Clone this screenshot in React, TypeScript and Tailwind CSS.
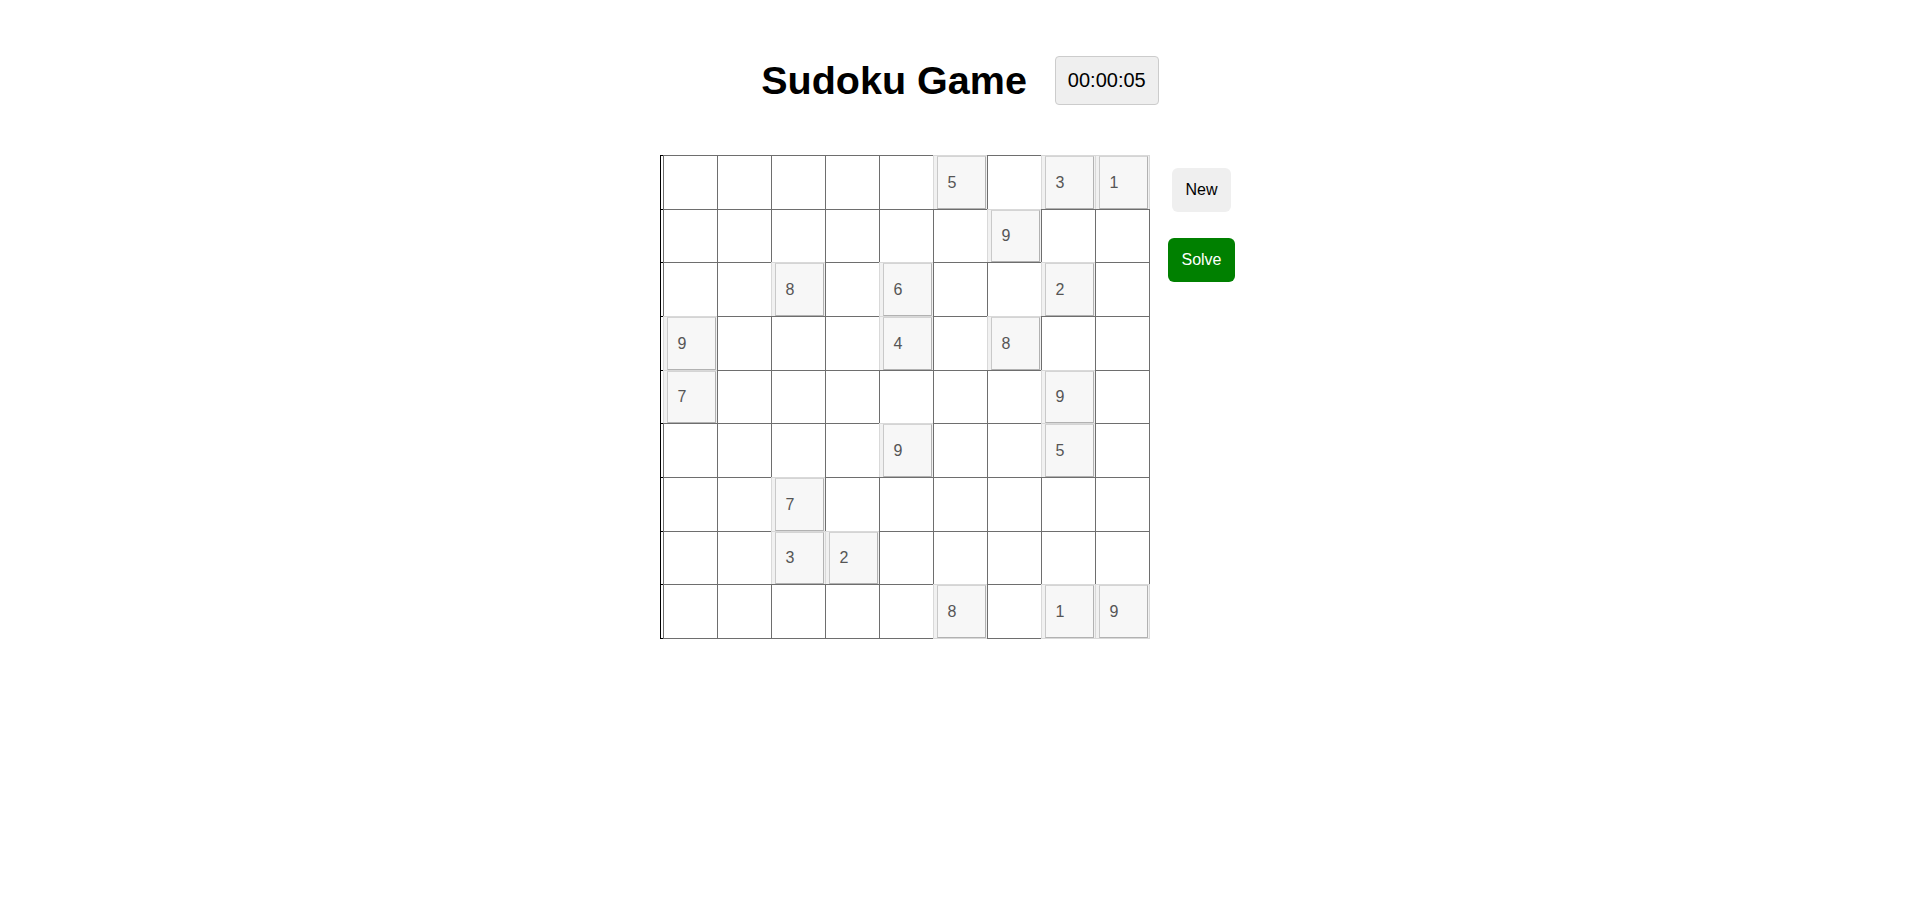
import React from 'react';

// 初始题目（0 = 空格）
const puzzle: number[][] = [
  [0, 0, 0, 0, 0, 5, 0, 3, 1],
  [0, 0, 0, 0, 0, 0, 9, 0, 0],
  [0, 0, 8, 0, 6, 0, 0, 2, 0],
  [9, 0, 0, 0, 4, 0, 8, 0, 0],
  [7, 0, 0, 0, 0, 0, 0, 9, 0],
  [0, 0, 0, 0, 9, 0, 0, 5, 0],
  [0, 0, 7, 0, 0, 0, 0, 0, 0],
  [0, 0, 3, 2, 0, 0, 0, 0, 0],
  [0, 0, 0, 0, 0, 8, 0, 1, 9],
];

// 行高交替 55/54，让总高度贴近原图
const shortRows = [1, 4, 7];

function Cell({ value, first, short }: { value: number; first: boolean; short: boolean }) {
  const size = `w-[55px] shrink-0 ${short ? 'h-[54px]' : 'h-[55px]'} ${first ? '' : '-ml-px'}`;
  if (value) {
    return (
      <div className={`${size} border border-[#d9d9d9] bg-[#f1f1f1] flex pl-[3px] pr-[1px]`}>
        <div className="flex-1 flex items-center pl-[10px] border border-t-[#d4d4d4] border-l-[#c9c9c9] border-r-[#b2b2b2] border-b-[#b2b2b2] bg-[#f7f7f7] text-[16px] text-[#555]">
          {value}
        </div>
      </div>
    );
  }
  return <div className={`${size} border border-[#6e6e6e] bg-white`} />;
}

export default function App() {
  return (
    <div className="min-h-screen bg-white font-['Liberation_Sans',Arial,sans-serif] text-black pt-[56px]">
      {/* 标题 + 计时器 */}
      <div className="flex items-center justify-center gap-[28px]">
        <h1 className="text-[39.5px] font-bold leading-none">Sudoku Game</h1>
        <div className="px-[12px] py-[12px] text-[20px] leading-[23px] bg-[#efefef] border border-[#cccccc] rounded-[4px]">
          00:00:05
        </div>
      </div>

      <div className="flex justify-center items-start mt-[50px] pr-[26px]">
        {/* 棋盘 */}
        <div className="flex flex-col">
          {puzzle.map((row, r) => (
            <div key={r} className={`flex border-l border-black ${r === 0 ? '' : '-mt-px'}`}>
              <div className={`w-[2px] shrink-0 border-t border-black ${r === 8 ? 'border-b' : ''}`} />
              {row.map((v, c) => (
                <Cell key={c} value={v} first={c === 0} short={shortRows.includes(r)} />
              ))}
            </div>
          ))}
        </div>

        {/* 操作按钮 */}
        <div className="flex flex-col items-center gap-[25.6px] mt-[13px] ml-[19px] w-[66px]">
          <button className="px-[13px] py-[13px] text-[16px] leading-[18px] bg-[#efefef] text-black rounded-[6px]">
            New
          </button>
          <button className="px-[13px] py-[13px] text-[16px] leading-[18px] bg-[#008000] text-white rounded-[6px]">
            Solve
          </button>
        </div>
      </div>
    </div>
  );
}
